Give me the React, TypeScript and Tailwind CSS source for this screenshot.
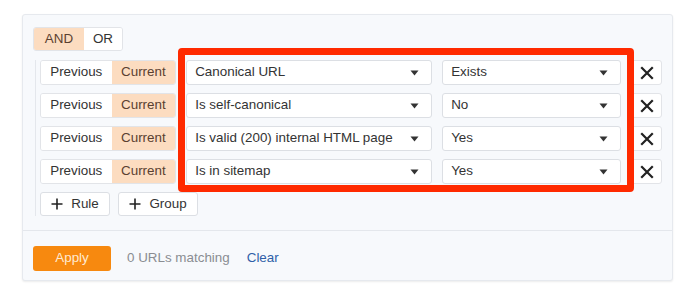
import React from "react";

const rules = [
  { field: "Canonical URL", value: "Exists" },
  { field: "Is self-canonical", value: "No" },
  { field: "Is valid (200) internal HTML page", value: "Yes" },
  { field: "Is in sitemap", value: "Yes" },
];

const Caret = () => (
  <svg width="9" height="6" viewBox="0 0 9 6" className="shrink-0">
    <path d="M0.5 0.5 L8.5 0.5 L4.5 5.5 Z" fill="#333" />
  </svg>
);

const Select = ({ label, width }: { label: string; width: string }) => (
  <div
    className={`${width} flex h-[25px] items-center justify-between rounded-[3px] border border-[#dcdfe4] bg-white pl-[8px] pr-[12px] text-[13.4px] text-[#333]`}
  >
    <span>{label}</span>
    <Caret />
  </div>
);

const Close = () => (
  <svg width="14" height="14" viewBox="0 0 14 14">
    <path d="M2 2 L12 12 M12 2 L2 12" stroke="#222" strokeWidth="2.2" strokeLinecap="square" />
  </svg>
);

const Plus = () => (
  <svg width="12" height="12" viewBox="0 0 12 12">
    <path d="M6 0.5 V11.5 M0.5 6 H11.5" stroke="#222" strokeWidth="1.6" />
  </svg>
);

export default function App() {
  return (
    <div
      className="min-h-screen bg-white pl-[22px] pt-[14px]"
      style={{ fontFamily: '"Liberation Sans", Arial, sans-serif' }}
    >
      <div className="relative w-[651px] rounded-[3px] border border-[#e6e9ee] bg-[#f7f9fc] shadow-[0_1px_2px_rgba(0,0,0,0.08)]">
        {/* Rules */}
        <div className="border-b border-[#e4e7ec] px-[10px] pb-[14px] pt-[12px]">
          <div className="flex">
            <div className="flex h-[24px] overflow-hidden rounded-[3px] border border-[#e2e4e8] text-[13.4px]">
              <div className="flex w-[50px] items-center justify-center bg-[#fcdcc0] text-[#5a4030]">AND</div>
              <div className="flex w-[38px] items-center justify-center bg-white text-[#333]">OR</div>
            </div>
          </div>

          <div className="ml-[2px] mt-[9px] border-l border-[#e4e7ec] pl-[4px]">
            <div className="flex flex-col gap-[8px]">
              {rules.map((r) => (
                <div key={r.field} className="flex items-center">
                  <div className="flex h-[25px] overflow-hidden rounded-[3px] border border-[#e2e4e8] text-[13.4px]">
                    <div className="flex w-[71px] items-center justify-center bg-white text-[#333]">Previous</div>
                    <div className="flex w-[64px] items-center justify-center bg-[#fcdcc0] text-[#5a4030]">Current</div>
                  </div>
                  <div className="ml-[10px]">
                    <Select label={r.field} width="w-[246px]" />
                  </div>
                  <div className="ml-[10px]">
                    <Select label={r.value} width="w-[179px]" />
                  </div>
                  <div className="ml-[10px] flex h-[25px] w-[31px] items-center justify-center rounded-[3px] border border-[#e2e4e8] bg-white">
                    <Close />
                  </div>
                </div>
              ))}
            </div>
            <div className="mt-[8px] flex gap-[8px] text-[13.4px] text-[#333]">
              <div className="flex h-[24px] w-[70px] items-center justify-center gap-[8px] rounded-[3px] border border-[#dcdfe4] bg-white">
                <Plus />
                <span>Rule</span>
              </div>
              <div className="flex h-[24px] w-[80px] items-center justify-center gap-[8px] rounded-[3px] border border-[#dcdfe4] bg-white">
                <Plus />
                <span>Group</span>
              </div>
            </div>
          </div>
        </div>

        {/* Footer */}
        <div className="flex items-center px-[10px] pb-[9px] pt-[15px] text-[13.4px]">
          <div className="flex h-[25px] w-[78px] items-center justify-center rounded-[3px] bg-[#f7890f] text-[#ffe9d2]">
            Apply
          </div>
          <span className="ml-[16px] text-[#8a8d92]">0 URLs matching</span>
          <span className="ml-[17px] text-[#2f5fa8]">Clear</span>
        </div>

        {/* Highlight annotation */}
        <div className="pointer-events-none absolute left-[155px] top-[33px] h-[144px] w-[456px] rounded-[4px] border-[7px] border-[#ff2a00]" />
      </div>
    </div>
  );
}
